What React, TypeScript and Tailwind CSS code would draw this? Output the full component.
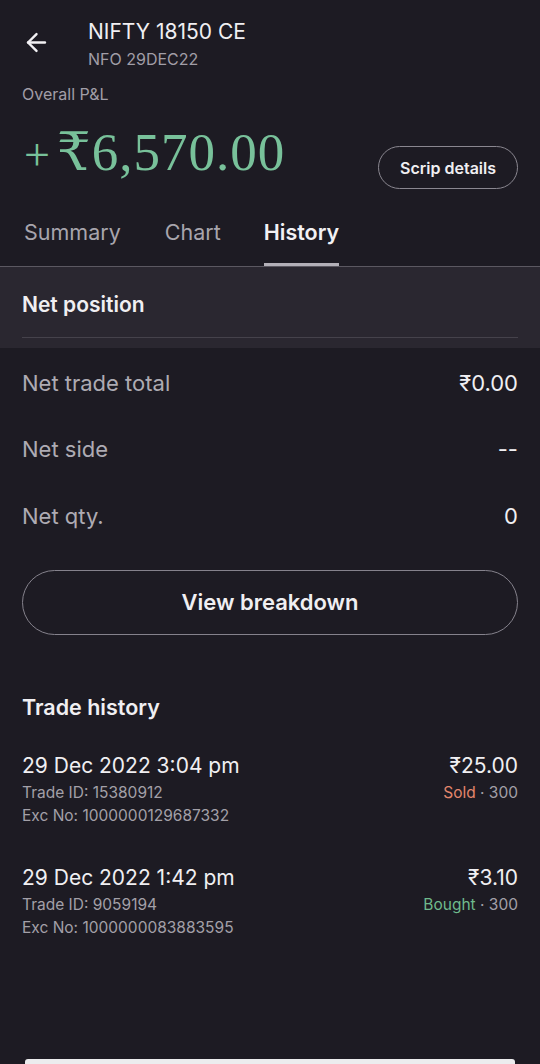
import { ArrowLeft } from "lucide-react";

type Trade = {
  time: string;
  tradeId: string;
  excNo: string;
  price: string;
  side: "Sold" | "Bought";
  qty: number;
};

const trades: Trade[] = [
  {
    time: "29 Dec 2022 3:04 pm",
    tradeId: "15380912",
    excNo: "1000000129687332",
    price: "₹25.00",
    side: "Sold",
    qty: 300,
  },
  {
    time: "29 Dec 2022 1:42 pm",
    tradeId: "9059194",
    excNo: "1000000083883595",
    price: "₹3.10",
    side: "Bought",
    qty: 300,
  },
];

const netRows = [
  { label: "Net trade total", value: "₹0.00" },
  { label: "Net side", value: "--" },
  { label: "Net qty.", value: "0" },
];

export default function App() {
  return (
    <div
      className="w-[540px] h-[1064px] bg-[#1d1b23] text-[#ecebef] flex flex-col overflow-hidden"
      style={{ fontFamily: "Inter, 'Noto Sans', sans-serif" }}
    >
      {/* Header */}
      <div className="flex items-start px-6 pt-[18px]">
        <ArrowLeft size={29} strokeWidth={2} className="mt-[10px] -ml-[2px] text-[#f2f1f4]" />
        <div className="ml-[37px]">
          <div className="text-[21px] leading-[28px] text-[#f0eff2]">NIFTY 18150 CE</div>
          <div className="text-[16px] leading-[22px] mt-[2px] text-[#a19ea7]">NFO 29DEC22</div>
        </div>
      </div>

      <div className="px-[22px] mt-[14px] text-[16px] leading-[20px] text-[#a19ea7]">Overall P&amp;L</div>

      {/* P&L */}
      <div className="flex items-start justify-between px-[22px] mt-[17px]">
        <div
          className="text-[53px] leading-[62px] text-[#78c19a] flex items-baseline tracking-[1px]"
          style={{ fontFamily: "'Liberation Serif', 'DejaVu Serif', serif" }}
        >
          <span className="text-[46px] mr-[6px] ml-[2px]">+</span>
          <span>₹6,570.00</span>
        </div>
        <button className="h-[43px] px-[21px] mt-[25px] rounded-full border border-[#8a8790] text-[16px] font-semibold text-[#f0eff2]">
          Scrip details
        </button>
      </div>

      {/* Tabs */}
      <div className="flex px-6 mt-[29px] border-b border-[#5b5861] text-[21.5px] leading-[28px]">
        <div className="pb-[20px] text-[#a8a5ad]">Summary</div>
        <div className="pb-[20px] ml-[44px] text-[#a8a5ad]">Chart</div>
        <div className="ml-[43px] flex flex-col">
          <div className="pb-[17px] font-semibold text-[#f2f1f4]">History</div>
          <div className="h-[3px] bg-[#b3b0b8]" />
        </div>
      </div>

      {/* Net position */}
      <div className="bg-[#2a2730] px-[22px] pt-[24px] pb-[10px]">
        <div className="text-[21px] leading-[28px] font-semibold text-[#f0eff2]">Net position</div>
        <div className="h-px bg-[#45424b] mt-[18px]" />
      </div>

      <div className="px-[22px] pt-[2px]">
        {netRows.map((r) => (
          <div key={r.label} className="flex justify-between items-center h-[66.5px] text-[22px]">
            <span className="text-[#aeabb3]">{r.label}</span>
            <span className="text-[#f0eff2]">{r.value}</span>
          </div>
        ))}
      </div>

      <div className="px-[22px] mt-[20px]">
        <button className="w-full h-[65px] rounded-full border border-[#85828c] text-[22px] font-semibold text-[#f0eff2]">
          View breakdown
        </button>
      </div>

      {/* Trade history */}
      <div className="px-[22px] mt-[58px]">
        <div className="text-[21.5px] leading-[28px] font-semibold text-[#f0eff2]">Trade history</div>
        <div className="mt-[30px] flex flex-col gap-[36px]">
          {trades.map((t) => (
            <div key={t.tradeId} className="flex justify-between">
              <div>
                <div className="text-[21px] leading-[30px] text-[#f0eff2]">{t.time}</div>
                <div className="text-[15.5px] leading-[23px] text-[#a3a0a8]">Trade ID: {t.tradeId}</div>
                <div className="text-[15.5px] leading-[23px] text-[#a3a0a8]">Exc No: {t.excNo}</div>
              </div>
              <div className="text-right">
                <div className="text-[21px] leading-[30px] text-[#f0eff2]">{t.price}</div>
                <div className="text-[15.5px] leading-[23px] text-[#a3a0a8]">
                  <span className={t.side === "Sold" ? "text-[#e3866c]" : "text-[#6fba8c]"}>{t.side}</span>
                  {" · "}
                  {t.qty}
                </div>
              </div>
            </div>
          ))}
        </div>
      </div>

      <div className="flex-1" />
      <div className="h-[5px] mx-[25px] rounded-t-[3px] bg-[#ececee]" />
    </div>
  );
}
